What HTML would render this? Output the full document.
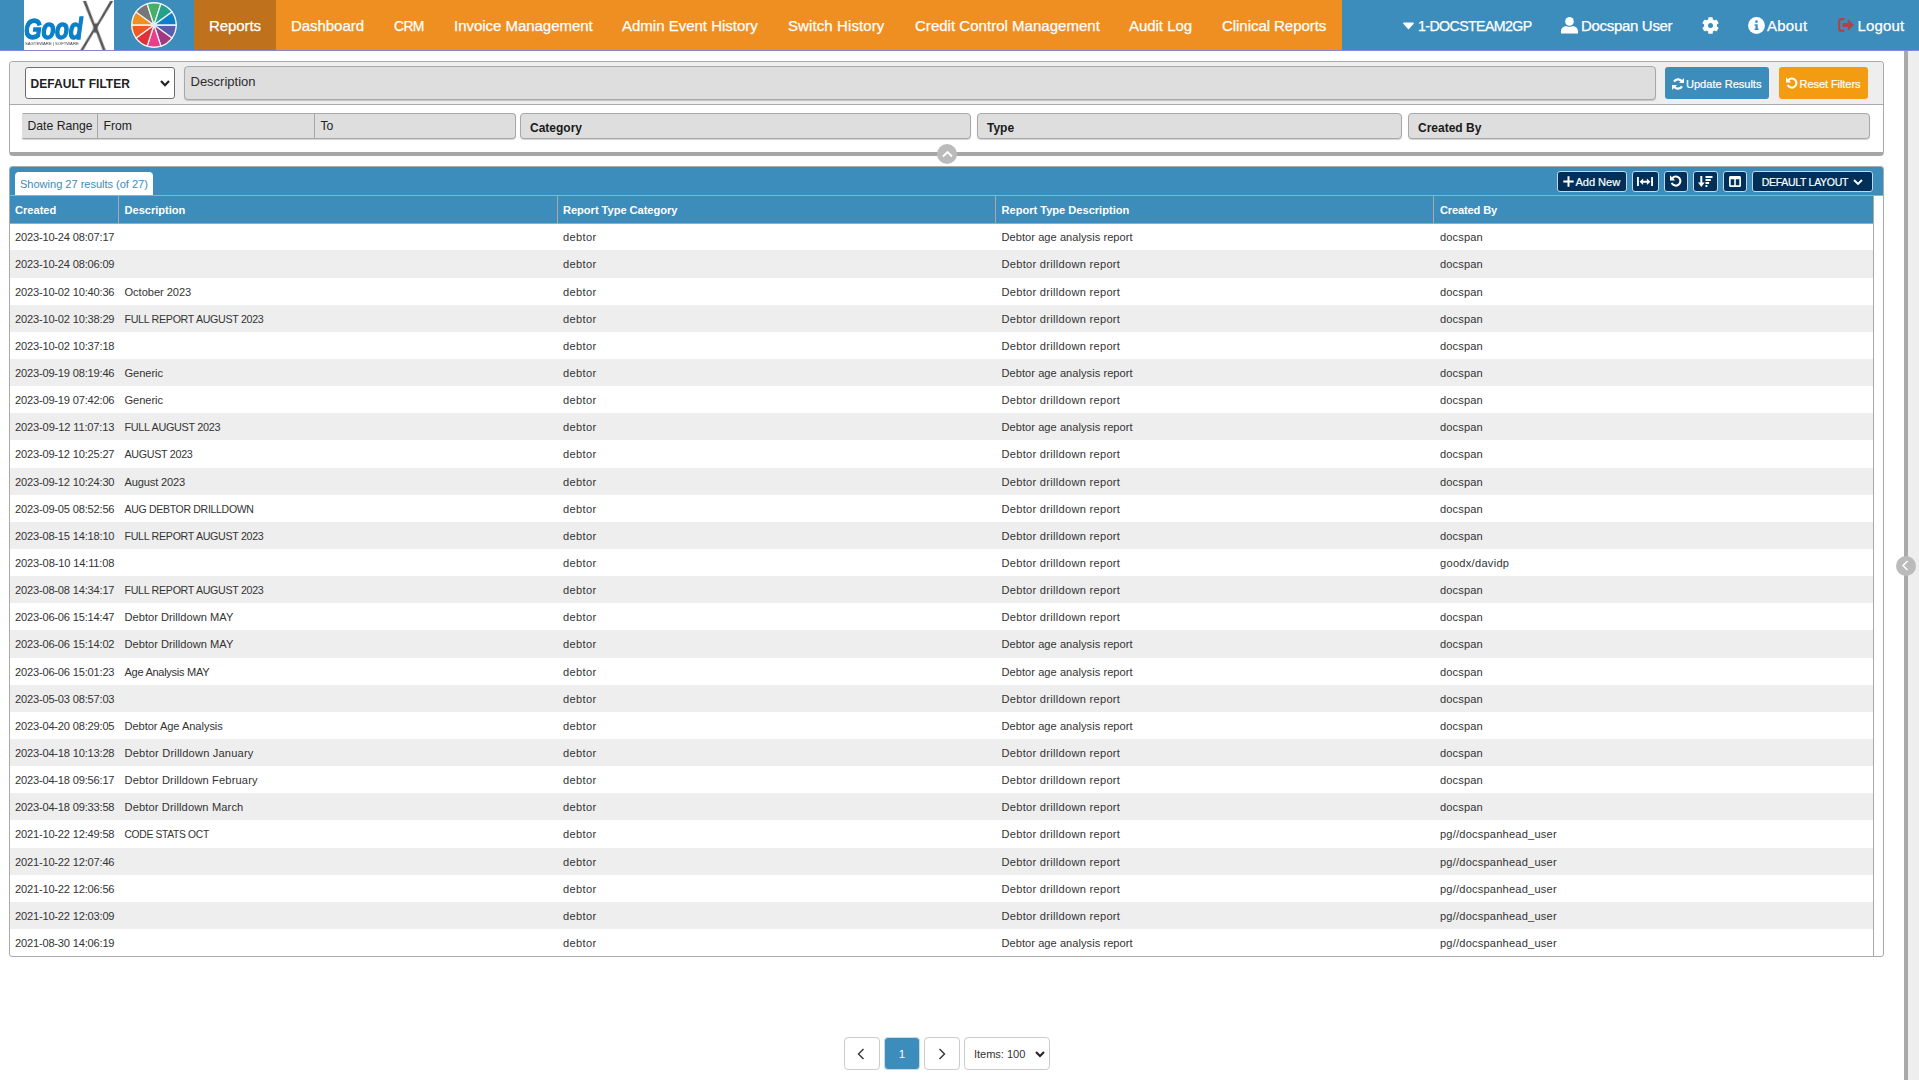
<!DOCTYPE html>
<html lang="en"><head><meta charset="utf-8"><title>GoodX Reports</title>
<style>
*{box-sizing:border-box;margin:0;padding:0}
html,body{width:1919px;height:1080px;overflow:hidden;background:#fff}
body{font-family:"Liberation Sans",sans-serif;color:#333;position:relative}
.abs{position:absolute}
svg{display:block;position:absolute}
/* NAV */
#nav{position:absolute;left:0;top:0;width:1919px;height:51px;background:#3c8dbc;border-bottom:1px solid #8a86d6}
#logo{position:absolute;left:24px;top:0;width:90px;height:50px;background:#fff;overflow:hidden}
#logo .good{position:absolute;left:0.3px;top:14.3px;font-weight:bold;font-style:italic;font-size:29.3px;line-height:30px;color:#0a80c8;-webkit-text-stroke:1.4px #0a80c8;transform-origin:0 0;transform:scaleX(.775);letter-spacing:-0.3px}
#logo .x{position:absolute;left:42.5px;top:-15.1px;font-family:"Liberation Sans",sans-serif;font-size:84px;line-height:90px;color:#555;transform-origin:50% 50%;transform:skewX(-6deg) scaleX(.7);filter:url(#thin)}
#logo .sub{position:absolute;left:1px;top:42.3px;font-size:10px;line-height:10px;color:#3a3a3a;white-space:nowrap;transform-origin:0 0;transform:scale(.42)}
#orange{position:absolute;left:194px;top:0;width:1148px;height:50px;background:#ef8f21}
#active{position:absolute;left:194px;top:0;width:82px;height:50px;background:#bf721b}
.ni{position:absolute;top:0;height:52px;line-height:52px;color:#fff;white-space:nowrap;-webkit-text-stroke:.25px #fff}
/* right bar */
#rbar{position:absolute;left:1904px;top:51px;width:4px;height:1029px;background:#a9a9a9}
#rside{position:absolute;left:1908px;top:51px;width:11px;height:1029px;background:#eee}
#rcirc{position:absolute;left:1896px;top:556px;width:20px;height:20px;border-radius:50%;background:#bbb}
/* FILTER */
#filter{position:absolute;left:9px;top:61px;width:1875px;height:95px;border:1px solid #aaa;border-bottom:4px solid #a6a6a6;border-radius:4px;background:#fff}
#frow1{position:absolute;left:0;top:0;width:1873px;height:43px;background:#eee;border-bottom:1px solid #aaa;border-radius:3px 3px 0 0}
.inp{position:absolute;background:#dedede;border:1px solid #a8a8a8;border-radius:4px;box-shadow:0 1px 1px rgba(0,0,0,.18)}
.inp span{position:absolute;white-space:nowrap}
#sel{position:absolute;left:25px;top:67px;width:150px;height:32px;background:#fff;border:1px solid #6e6e6e;border-radius:3px}
#sel span{position:absolute;left:4.5px;top:1.2px;line-height:31px;font-weight:bold;color:#222;white-space:nowrap}
.btn{position:absolute;border-radius:3px;color:#fff;white-space:nowrap;-webkit-text-stroke:.2px #fff}
/* GRID */
#grid{position:absolute;left:9px;top:166px;width:1875px;height:791px;border:1px solid #aaa;border-radius:3px;background:#fff;overflow:hidden}
#gbar{position:absolute;left:0;top:0;width:1873px;height:29px;background:#3c8dbc;border-bottom:1px solid #a9a9a9}
#ghead{z-index:2;position:absolute;left:0;top:28px;width:1863px;height:29px;background:#3c8dbc;border-top:1px solid #a9a9a9;border-bottom:1px solid #a9a9a9}
#ghead span{position:absolute;top:0.8px;line-height:27px;color:#fff;font-weight:bold;white-space:nowrap}
#ghead i{position:absolute;top:0;width:1px;height:27px;background:#a9a9a9}
#vline{position:absolute;left:1863px;top:29px;width:1px;height:762px;background:#a9a9a9}
#tab{position:absolute;left:5px;top:5px;width:138px;height:24px;background:#fff;border-radius:4px 4px 0 0;color:#3c8dbc;line-height:24px;white-space:nowrap}
#tab span{position:absolute;left:5px;top:0}
#rows{position:absolute;left:0;top:0;width:1863px}
.tr{position:absolute;left:0;width:1863px;line-height:27.1px;color:#333;white-space:nowrap}
.tr:nth-child(even){background:#eee}
.tr span{position:absolute;top:1.1px}
.c1{left:5px}.c2{left:114.5px}.c3{left:553px}.c4{left:991.5px}.c5{left:1430px}
.dt{font-size:10.66px}
.tb{position:absolute;top:4px;height:21px;background:#00305a;border:1px solid #c5d6e4;border-radius:3px;color:#fff;font-size:11.5px;line-height:19px;white-space:nowrap;-webkit-text-stroke:.2px #fff}
/* PAGER */
.pg{position:absolute;top:1037px;height:33px;border:1px solid #ccc;border-radius:4px;background:#fff}
</style></head><body>

<svg width="0" height="0" style="position:absolute"><defs><filter id="thin" x="-10%" y="-10%" width="120%" height="120%"><feMorphology operator="erode" radius="1.2"/></filter></defs></svg>
<div id="nav">
  <div id="logo"><span class="good">Good</span><span class="x">X</span><span class="sub">SAGTEWARE | SOFTWARE</span></div>
  <svg style="left:131.3px;top:1.9px" width="46" height="46" viewBox="-23 -23 46 46"><circle r="22.6" fill="#eef3f7"/><path d="M0 0L22.20 0.00A22.2 22.2 0 0 1 17.96 13.05Z" fill="#5b5ea6" stroke="#eef3f7" stroke-width="1.3"/><path d="M0 0L17.96 13.05A22.2 22.2 0 0 1 6.86 21.11Z" fill="#a0397f" stroke="#eef3f7" stroke-width="1.3"/><path d="M0 0L6.86 21.11A22.2 22.2 0 0 1 -6.86 21.11Z" fill="#e83e8c" stroke="#eef3f7" stroke-width="1.3"/><path d="M0 0L-6.86 21.11A22.2 22.2 0 0 1 -17.96 13.05Z" fill="#e03038" stroke="#eef3f7" stroke-width="1.3"/><path d="M0 0L-17.96 13.05A22.2 22.2 0 0 1 -22.20 0.00Z" fill="#f05a22" stroke="#eef3f7" stroke-width="1.3"/><path d="M0 0L-22.20 0.00A22.2 22.2 0 0 1 -17.96 -13.05Z" fill="#f09020" stroke="#eef3f7" stroke-width="1.3"/><path d="M0 0L-17.96 -13.05A22.2 22.2 0 0 1 -6.86 -21.11Z" fill="#777777" stroke="#eef3f7" stroke-width="1.3"/><path d="M0 0L-6.86 -21.11A22.2 22.2 0 0 1 6.86 -21.11Z" fill="#45b068" stroke="#eef3f7" stroke-width="1.3"/><path d="M0 0L6.86 -21.11A22.2 22.2 0 0 1 17.96 -13.05Z" fill="#25a08c" stroke="#eef3f7" stroke-width="1.3"/><path d="M0 0L17.96 -13.05A22.2 22.2 0 0 1 22.20 -0.00Z" fill="#0a80c8" stroke="#eef3f7" stroke-width="1.3"/><circle r="2" fill="#dfeaf2"/></svg>
  <div id="orange"></div><div id="active"></div>
  <span class="ni" id="n1" style="left:209px;font-size:15.0px;letter-spacing:-0.085px">Reports</span>
  <span class="ni" id="n2" style="left:291px;font-size:15.0px;letter-spacing:-0.049px">Dashboard</span>
  <span class="ni" id="n3" style="left:394px;font-size:13.9px;letter-spacing:-0.597px">CRM</span>
  <span class="ni" id="n4" style="left:454px;font-size:15.0px;letter-spacing:-0.029px">Invoice Management</span>
  <span class="ni" id="n5" style="left:622px;font-size:15.0px;letter-spacing:-0.007px">Admin Event History</span>
  <span class="ni" id="n6" style="left:788px;font-size:15.0px;letter-spacing:0.099px">Switch History</span>
  <span class="ni" id="n7" style="left:915px;font-size:15.0px;letter-spacing:0.024px">Credit Control Management</span>
  <span class="ni" id="n8" style="left:1129px;font-size:15.0px;letter-spacing:-0.038px">Audit Log</span>
  <span class="ni" id="n9" style="left:1222px;font-size:15.0px;letter-spacing:-0.049px">Clinical Reports</span>

  <svg style="left:1403px;top:22px" width="11" height="8" viewBox="0 0 11 8"><path d="M.8 .6h9.4c.6 0 .9.7.5 1.1L6 7c-.3.3-.7.3-1 0L.3 1.700C-.1 1.300.2.6.8.600z" fill="#fff"/></svg>
  <span class="ni" id="n10" style="left:1418px;font-size:14.19px;letter-spacing:-0.602px">1-DOCSTEAM2GP</span>
  <svg style="left:1561px;top:16.500px" width="17" height="17" viewBox="0 0 17 17"><circle cx="8.5" cy="4.400" r="4.300" fill="#fff"/><path d="M0 16.500v-2.300c0-2.800 2.200-5 5-5h.700c.900.400 1.800.600 2.800.600s1.900-.2 2.800-.6h.700c2.800 0 5 2.200 5 5v2.300z" fill="#fff"/></svg>
  <span class="ni" id="n11" style="left:1581px;font-size:15.0px;letter-spacing:-0.312px">Docspan User</span>
  <svg style="left:1701.600px;top:16.700px" width="17" height="17" viewBox="-8.500 -8.500 17 17"><rect x="-2.300" y="-8.300" width="4.600" height="16.600" rx="0.900" fill="#fff" transform="rotate(0)"/><rect x="-2.300" y="-8.300" width="4.600" height="16.600" rx="0.900" fill="#fff" transform="rotate(60)"/><rect x="-2.300" y="-8.300" width="4.600" height="16.600" rx="0.900" fill="#fff" transform="rotate(120)"/><circle r="6.500" fill="#fff"/><circle r="2.500" fill="#3c8dbc"/></svg>
  <svg style="left:1747.500px;top:16.500px" width="17" height="17" viewBox="0 0 17 17"><circle cx="8.5" cy="8.5" r="8.400" fill="#fff"/><circle cx="8.500" cy="4.700" r="1.350" fill="#3c8dbc"/><path d="M6.600 7.300h3.100v4.300h.9v1.400h-4v-1.400h.9v-2.900h-.9z" fill="#3c8dbc"/></svg>
  <span class="ni" id="n12" style="left:1767px;font-size:15.0px;letter-spacing:0.225px">About</span>
  <svg style="left:1838px;top:18px" width="16" height="14" viewBox="0 0 16 14"><path d="M5.600 1.200H3.200c-1.100 0-2 .9-2 2v7.600c0 1.100.9 2 2 2h2.400" fill="none" stroke="#ad4643" stroke-width="2.200" stroke-linecap="round"/><path d="M5.200 5h4.500V2.400c0-.6.700-.9 1.100-.5l4.700 4.600c.3.300.3.700 0 1l-4.700 4.600c-.4.400-1.100.100-1.100-.5V9H5.200c-.4 0-.7-.3-.7-.7V5.700c0-.4.300-.7.700-.7z" fill="#ad4643"/></svg>
  <span class="ni" id="n13" style="left:1857.500px;font-size:15.0px;letter-spacing:0.167px">Logout</span>
</div>

<div id="rbar"></div><div id="rside"></div>
<div id="rcirc"><svg style="left:5px;top:3.800px" width="8" height="11" viewBox="0 0 8 11"><path d="M6.500 1L2 5.500 6.500 10" fill="none" stroke="#fff" stroke-width="1.500"/></svg></div>

<div id="filter"><div id="frow1"></div></div>
<div id="sel"><span id="seltxt" style="font-size:12.0px;letter-spacing:0.044px">DEFAULT FILTER</span><svg style="left:134px;top:12px" width="10" height="7" viewBox="0 0 10 7"><path d="M1 1l4 4.200L9 1" fill="none" stroke="#222" stroke-width="2.200"/></svg></div>
<div class="inp" style="left:184px;top:66px;width:1472px;height:34px"><span id="tdesc" style="left:5.500px;top:0;line-height:29px;font-size:13px;color:#2c2c2c">Description</span></div>
<div class="btn" id="bupd" style="left:1665px;top:67px;width:104px;height:32px;background:#3c8dbc">
  <svg style="left:7px;top:10.500px" width="12" height="12" viewBox="0 0 12 12"><path d="M10.300 4.500A4.600 4.600 0 0 0 2 3.600M1.700 7.500A4.600 4.600 0 0 0 10 8.400" fill="none" stroke="#fff" stroke-width="2.200"/><path d="M12 0v5H7zM0 12V7h5z" fill="#fff"/></svg>
  <span id="tupd" class="abs" style="left:21px;top:1px;line-height:32px;font-size:11.1px;letter-spacing:-0.030px">Update Results</span></div>
<div class="btn" id="brst" style="left:1779px;top:67px;width:89px;height:32px;background:#f39c12">
  <svg style="left:6.500px;top:10px" width="12" height="12" viewBox="0 0 12 12"><path d="M2.300 3.300A4.500 4.500 0 1 1 1.700 7.800" fill="none" stroke="#fff" stroke-width="2.100"/><path d="M0 .2v5.200h5.200z" fill="#fff"/></svg>
  <span id="trst" class="abs" style="left:20.500px;top:1px;line-height:32px;font-size:11.1px;letter-spacing:-0.103px">Reset Filters</span></div>

<div class="inp" style="left:22px;top:113px;width:494px;height:26px;border-left-color:#dedede;border-radius:1px 4px 4px 1px">
  <span id="tdr" style="left:4.500px;top:1.2px;line-height:23px;font-size:12.200px;color:#222">Date Range</span>
  <i class="abs" style="left:74px;top:0;width:1px;height:24px;background:#a8a8a8"></i>
  <span id="tfrom" style="left:80.500px;top:1.2px;line-height:23px;font-size:12.200px;color:#222">From</span>
  <i class="abs" style="left:291px;top:0;width:1px;height:24px;background:#a8a8a8"></i>
  <span id="tto" style="left:297.500px;top:1.2px;line-height:23px;font-size:12.200px;color:#222">To</span>
</div>
<div class="inp" style="left:520px;top:113px;width:451px;height:26px"><span id="tcat" style="left:9px;top:1.200px;line-height:26px;font-size:12px;font-weight:bold;color:#1a1a1a">Category</span></div>
<div class="inp" style="left:977px;top:113px;width:425px;height:26px"><span id="ttyp" style="left:9px;top:1.200px;line-height:26px;font-size:12px;font-weight:bold;color:#1a1a1a">Type</span></div>
<div class="inp" style="left:1408px;top:113px;width:462px;height:26px"><span id="tcb" style="left:9px;top:1.200px;line-height:26px;font-size:12px;font-weight:bold;color:#1a1a1a">Created By</span></div>
<div class="abs" style="left:937px;top:144px;width:20px;height:20px;border-radius:50%;background:#bbb"><svg style="left:4.500px;top:5.500px" width="11" height="8" viewBox="0 0 11 8"><path d="M1 6.500L5.500 2 10 6.500" fill="none" stroke="#fff" stroke-width="1.800"/></svg></div>

<div id="grid">
  <div id="gbar"></div>
  <div id="tab"><span id="ttab" style="font-size:11.1px;letter-spacing:-0.039px">Showing 27 results (of 27)</span></div>
  <div class="tb" id="b1" style="left:1547px;width:70px"><svg style="left:5px;top:4px" width="11" height="11" viewBox="0 0 11 11"><path d="M5.500 .3v10.400M.3 5.500h10.400" stroke="#fff" stroke-width="2" fill="none"/></svg><span id="tadd" class="abs" style="left:17.500px;top:0.8px;font-size:11.1px;letter-spacing:-0.051px">Add New</span></div>
  <div class="tb" style="left:1622px;width:27px"><svg style="left:4.300px;top:4.500px" width="16" height="9.500" viewBox="0 0 17 10"><path d="M1 0v10M16 0v10" stroke="#fff" stroke-width="2" fill="none"/><path d="M5 5h7" stroke="#fff" stroke-width="1.900" fill="none"/><path d="M2.800 5l3.700-3.400v6.800zM14.200 5l-3.700-3.400v6.800z" fill="#fff"/></svg></div>
  <div class="tb" style="left:1654px;width:24px"><svg style="left:4.500px;top:3px" width="12" height="12" viewBox="0 0 12 12"><path d="M2.300 3.300A4.500 4.500 0 1 1 1.700 7.800" fill="none" stroke="#fff" stroke-width="2.100"/><path d="M0 .2v5.200h5.200z" fill="#fff"/></svg></div>
  <div class="tb" style="left:1683px;width:25px"><svg style="left:3.500px;top:4px" width="15" height="11" viewBox="0 0 15 11"><path d="M3.300 0v9" stroke="#fff" stroke-width="2" fill="none"/><path d="M0 6.600h6.600L3.300 11z" fill="#fff"/><path d="M7.500 1h7M7.500 4h5.300M7.500 7h3.600M7.500 10h1.900" stroke="#fff" stroke-width="1.900" fill="none"/></svg></div>
  <div class="tb" style="left:1713px;width:24px"><svg style="left:5px;top:4px" width="12" height="11" viewBox="0 0 12 11"><path d="M1.500 0h9c.8 0 1.500.7 1.500 1.500v8c0 .8-.7 1.500-1.500 1.500h-9C.7 11 0 10.300 0 9.500v-8C0 .7.700 0 1.500 0zM1.700 3.200v6.100h3.500V3.200zM6.800 3.200v6.100h3.500V3.200z" fill="#fff" fill-rule="evenodd"/></svg></div>
  <div class="tb" style="left:1742px;width:121px"><span id="tdl" class="abs" style="left:8.700px;top:0.8px;font-size:10.52px;letter-spacing:-0.298px">DEFAULT LAYOUT</span><svg style="left:99.500px;top:6.500px" width="10" height="7" viewBox="0 0 10 7"><path d="M1 1l4 4L9 1" fill="none" stroke="#fff" stroke-width="1.900"/></svg></div>
  <div id="ghead">
    <span id="h1" style="left:5px;font-size:11.1px;letter-spacing:0.000px">Created</span><i style="left:108px"></i>
    <span id="h2" style="left:114.500px;font-size:11.1px;letter-spacing:-0.016px">Description</span><i style="left:547px"></i>
    <span id="h3" style="left:553px;font-size:11.1px;letter-spacing:-0.033px">Report Type Category</span><i style="left:985px"></i>
    <span id="h4" style="left:991.500px;font-size:11.1px;letter-spacing:-0.012px">Report Type Description</span><i style="left:1423px"></i>
    <span id="h5" style="left:1430px;font-size:11.1px;letter-spacing:-0.158px">Created By</span>
  </div>
  <div id="vline"></div>
  <div id="rows">
<div class="tr" style="top:56px;height:27px"><span class="c1" style="font-size:11.1px;letter-spacing:-0.193px">2023-10-24 08:07:17</span><span class="c3" style="font-size:11.1px;letter-spacing:0.357px">debtor</span><span class="c4" style="font-size:11.1px;letter-spacing:0.038px">Debtor age analysis report</span><span class="c5" style="font-size:11.1px;letter-spacing:0.118px">docspan</span></div>
<div class="tr" style="top:83px;height:28px"><span class="c1" style="font-size:11.1px;letter-spacing:-0.193px">2023-10-24 08:06:09</span><span class="c3" style="font-size:11.1px;letter-spacing:0.357px">debtor</span><span class="c4" style="font-size:11.1px;letter-spacing:0.282px">Debtor drilldown report</span><span class="c5" style="font-size:11.1px;letter-spacing:0.118px">docspan</span></div>
<div class="tr" style="top:111px;height:27px"><span class="c1" style="font-size:11.1px;letter-spacing:-0.193px">2023-10-02 10:40:36</span><span class="c2" style="font-size:11.1px;letter-spacing:-0.042px">October 2023</span><span class="c3" style="font-size:11.1px;letter-spacing:0.357px">debtor</span><span class="c4" style="font-size:11.1px;letter-spacing:0.282px">Debtor drilldown report</span><span class="c5" style="font-size:11.1px;letter-spacing:0.118px">docspan</span></div>
<div class="tr" style="top:138px;height:27px"><span class="c1" style="font-size:11.1px;letter-spacing:-0.193px">2023-10-02 10:38:29</span><span class="c2" style="font-size:10.67px;letter-spacing:-0.300px">FULL REPORT AUGUST 2023</span><span class="c3" style="font-size:11.1px;letter-spacing:0.357px">debtor</span><span class="c4" style="font-size:11.1px;letter-spacing:0.282px">Debtor drilldown report</span><span class="c5" style="font-size:11.1px;letter-spacing:0.118px">docspan</span></div>
<div class="tr" style="top:165px;height:27px"><span class="c1" style="font-size:11.1px;letter-spacing:-0.193px">2023-10-02 10:37:18</span><span class="c3" style="font-size:11.1px;letter-spacing:0.357px">debtor</span><span class="c4" style="font-size:11.1px;letter-spacing:0.282px">Debtor drilldown report</span><span class="c5" style="font-size:11.1px;letter-spacing:0.118px">docspan</span></div>
<div class="tr" style="top:192px;height:27px"><span class="c1" style="font-size:11.1px;letter-spacing:-0.193px">2023-09-19 08:19:46</span><span class="c2" style="font-size:11.1px;letter-spacing:-0.056px">Generic</span><span class="c3" style="font-size:11.1px;letter-spacing:0.357px">debtor</span><span class="c4" style="font-size:11.1px;letter-spacing:0.038px">Debtor age analysis report</span><span class="c5" style="font-size:11.1px;letter-spacing:0.118px">docspan</span></div>
<div class="tr" style="top:219px;height:27px"><span class="c1" style="font-size:11.1px;letter-spacing:-0.193px">2023-09-19 07:42:06</span><span class="c2" style="font-size:11.1px;letter-spacing:-0.056px">Generic</span><span class="c3" style="font-size:11.1px;letter-spacing:0.357px">debtor</span><span class="c4" style="font-size:11.1px;letter-spacing:0.282px">Debtor drilldown report</span><span class="c5" style="font-size:11.1px;letter-spacing:0.118px">docspan</span></div>
<div class="tr" style="top:246px;height:27px"><span class="c1" style="font-size:11.1px;letter-spacing:-0.150px">2023-09-12 11:07:13</span><span class="c2" style="font-size:10.83px;letter-spacing:-0.299px">FULL AUGUST 2023</span><span class="c3" style="font-size:11.1px;letter-spacing:0.357px">debtor</span><span class="c4" style="font-size:11.1px;letter-spacing:0.038px">Debtor age analysis report</span><span class="c5" style="font-size:11.1px;letter-spacing:0.118px">docspan</span></div>
<div class="tr" style="top:273px;height:28px"><span class="c1" style="font-size:11.1px;letter-spacing:-0.193px">2023-09-12 10:25:27</span><span class="c2" style="font-size:10.72px;letter-spacing:-0.300px">AUGUST 2023</span><span class="c3" style="font-size:11.1px;letter-spacing:0.357px">debtor</span><span class="c4" style="font-size:11.1px;letter-spacing:0.282px">Debtor drilldown report</span><span class="c5" style="font-size:11.1px;letter-spacing:0.118px">docspan</span></div>
<div class="tr" style="top:301px;height:27px"><span class="c1" style="font-size:11.1px;letter-spacing:-0.193px">2023-09-12 10:24:30</span><span class="c2" style="font-size:11.1px;letter-spacing:-0.151px">August 2023</span><span class="c3" style="font-size:11.1px;letter-spacing:0.357px">debtor</span><span class="c4" style="font-size:11.1px;letter-spacing:0.282px">Debtor drilldown report</span><span class="c5" style="font-size:11.1px;letter-spacing:0.118px">docspan</span></div>
<div class="tr" style="top:328px;height:27px"><span class="c1" style="font-size:11.1px;letter-spacing:-0.193px">2023-09-05 08:52:56</span><span class="c2" style="font-size:10.51px;letter-spacing:-0.301px">AUG DEBTOR DRILLDOWN</span><span class="c3" style="font-size:11.1px;letter-spacing:0.357px">debtor</span><span class="c4" style="font-size:11.1px;letter-spacing:0.282px">Debtor drilldown report</span><span class="c5" style="font-size:11.1px;letter-spacing:0.118px">docspan</span></div>
<div class="tr" style="top:355px;height:27px"><span class="c1" style="font-size:11.1px;letter-spacing:-0.193px">2023-08-15 14:18:10</span><span class="c2" style="font-size:10.67px;letter-spacing:-0.300px">FULL REPORT AUGUST 2023</span><span class="c3" style="font-size:11.1px;letter-spacing:0.357px">debtor</span><span class="c4" style="font-size:11.1px;letter-spacing:0.282px">Debtor drilldown report</span><span class="c5" style="font-size:11.1px;letter-spacing:0.118px">docspan</span></div>
<div class="tr" style="top:382px;height:27px"><span class="c1" style="font-size:11.1px;letter-spacing:-0.150px">2023-08-10 14:11:08</span><span class="c3" style="font-size:11.1px;letter-spacing:0.357px">debtor</span><span class="c4" style="font-size:11.1px;letter-spacing:0.282px">Debtor drilldown report</span><span class="c5" style="font-size:11.1px;letter-spacing:0.276px">goodx/davidp</span></div>
<div class="tr" style="top:409px;height:27px"><span class="c1" style="font-size:11.1px;letter-spacing:-0.193px">2023-08-08 14:34:17</span><span class="c2" style="font-size:10.67px;letter-spacing:-0.300px">FULL REPORT AUGUST 2023</span><span class="c3" style="font-size:11.1px;letter-spacing:0.357px">debtor</span><span class="c4" style="font-size:11.1px;letter-spacing:0.282px">Debtor drilldown report</span><span class="c5" style="font-size:11.1px;letter-spacing:0.118px">docspan</span></div>
<div class="tr" style="top:436px;height:27px"><span class="c1" style="font-size:11.1px;letter-spacing:-0.193px">2023-06-06 15:14:47</span><span class="c2" style="font-size:11.1px;letter-spacing:0.027px">Debtor Drilldown MAY</span><span class="c3" style="font-size:11.1px;letter-spacing:0.357px">debtor</span><span class="c4" style="font-size:11.1px;letter-spacing:0.282px">Debtor drilldown report</span><span class="c5" style="font-size:11.1px;letter-spacing:0.118px">docspan</span></div>
<div class="tr" style="top:463px;height:28px"><span class="c1" style="font-size:11.1px;letter-spacing:-0.193px">2023-06-06 15:14:02</span><span class="c2" style="font-size:11.1px;letter-spacing:0.027px">Debtor Drilldown MAY</span><span class="c3" style="font-size:11.1px;letter-spacing:0.357px">debtor</span><span class="c4" style="font-size:11.1px;letter-spacing:0.038px">Debtor age analysis report</span><span class="c5" style="font-size:11.1px;letter-spacing:0.118px">docspan</span></div>
<div class="tr" style="top:491px;height:27px"><span class="c1" style="font-size:11.1px;letter-spacing:-0.193px">2023-06-06 15:01:23</span><span class="c2" style="font-size:11.07px;letter-spacing:-0.302px">Age Analysis MAY</span><span class="c3" style="font-size:11.1px;letter-spacing:0.357px">debtor</span><span class="c4" style="font-size:11.1px;letter-spacing:0.038px">Debtor age analysis report</span><span class="c5" style="font-size:11.1px;letter-spacing:0.118px">docspan</span></div>
<div class="tr" style="top:518px;height:27px"><span class="c1" style="font-size:11.1px;letter-spacing:-0.193px">2023-05-03 08:57:03</span><span class="c3" style="font-size:11.1px;letter-spacing:0.357px">debtor</span><span class="c4" style="font-size:11.1px;letter-spacing:0.282px">Debtor drilldown report</span><span class="c5" style="font-size:11.1px;letter-spacing:0.118px">docspan</span></div>
<div class="tr" style="top:545px;height:27px"><span class="c1" style="font-size:11.1px;letter-spacing:-0.193px">2023-04-20 08:29:05</span><span class="c2" style="font-size:11.1px;letter-spacing:-0.053px">Debtor Age Analysis</span><span class="c3" style="font-size:11.1px;letter-spacing:0.357px">debtor</span><span class="c4" style="font-size:11.1px;letter-spacing:0.038px">Debtor age analysis report</span><span class="c5" style="font-size:11.1px;letter-spacing:0.118px">docspan</span></div>
<div class="tr" style="top:572px;height:27px"><span class="c1" style="font-size:11.1px;letter-spacing:-0.193px">2023-04-18 10:13:28</span><span class="c2" style="font-size:11.1px;letter-spacing:0.188px">Debtor Drilldown January</span><span class="c3" style="font-size:11.1px;letter-spacing:0.357px">debtor</span><span class="c4" style="font-size:11.1px;letter-spacing:0.282px">Debtor drilldown report</span><span class="c5" style="font-size:11.1px;letter-spacing:0.118px">docspan</span></div>
<div class="tr" style="top:599px;height:27px"><span class="c1" style="font-size:11.1px;letter-spacing:-0.193px">2023-04-18 09:56:17</span><span class="c2" style="font-size:11.1px;letter-spacing:0.149px">Debtor Drilldown February</span><span class="c3" style="font-size:11.1px;letter-spacing:0.357px">debtor</span><span class="c4" style="font-size:11.1px;letter-spacing:0.282px">Debtor drilldown report</span><span class="c5" style="font-size:11.1px;letter-spacing:0.118px">docspan</span></div>
<div class="tr" style="top:626px;height:27px"><span class="c1" style="font-size:11.1px;letter-spacing:-0.193px">2023-04-18 09:33:58</span><span class="c2" style="font-size:11.1px;letter-spacing:0.135px">Debtor Drilldown March</span><span class="c3" style="font-size:11.1px;letter-spacing:0.357px">debtor</span><span class="c4" style="font-size:11.1px;letter-spacing:0.282px">Debtor drilldown report</span><span class="c5" style="font-size:11.1px;letter-spacing:0.118px">docspan</span></div>
<div class="tr" style="top:653px;height:28px"><span class="c1" style="font-size:11.1px;letter-spacing:-0.193px">2021-10-22 12:49:58</span><span class="c2" style="font-size:10.27px;letter-spacing:-0.301px">CODE STATS OCT</span><span class="c3" style="font-size:11.1px;letter-spacing:0.357px">debtor</span><span class="c4" style="font-size:11.1px;letter-spacing:0.282px">Debtor drilldown report</span><span class="c5" style="font-size:11.1px;letter-spacing:0.195px">pg//docspanhead_user</span></div>
<div class="tr" style="top:681px;height:27px"><span class="c1" style="font-size:11.1px;letter-spacing:-0.193px">2021-10-22 12:07:46</span><span class="c3" style="font-size:11.1px;letter-spacing:0.357px">debtor</span><span class="c4" style="font-size:11.1px;letter-spacing:0.282px">Debtor drilldown report</span><span class="c5" style="font-size:11.1px;letter-spacing:0.195px">pg//docspanhead_user</span></div>
<div class="tr" style="top:708px;height:27px"><span class="c1" style="font-size:11.1px;letter-spacing:-0.193px">2021-10-22 12:06:56</span><span class="c3" style="font-size:11.1px;letter-spacing:0.357px">debtor</span><span class="c4" style="font-size:11.1px;letter-spacing:0.282px">Debtor drilldown report</span><span class="c5" style="font-size:11.1px;letter-spacing:0.195px">pg//docspanhead_user</span></div>
<div class="tr" style="top:735px;height:27px"><span class="c1" style="font-size:11.1px;letter-spacing:-0.193px">2021-10-22 12:03:09</span><span class="c3" style="font-size:11.1px;letter-spacing:0.357px">debtor</span><span class="c4" style="font-size:11.1px;letter-spacing:0.282px">Debtor drilldown report</span><span class="c5" style="font-size:11.1px;letter-spacing:0.195px">pg//docspanhead_user</span></div>
<div class="tr" style="top:762px;height:27px"><span class="c1" style="font-size:11.1px;letter-spacing:-0.193px">2021-08-30 14:06:19</span><span class="c3" style="font-size:11.1px;letter-spacing:0.357px">debtor</span><span class="c4" style="font-size:11.1px;letter-spacing:0.038px">Debtor age analysis report</span><span class="c5" style="font-size:11.1px;letter-spacing:0.195px">pg//docspanhead_user</span></div>
  </div>
</div>

<div class="pg" style="left:844px;width:36px"><svg style="left:12px;top:10px" width="8" height="12" viewBox="0 0 8 12"><path d="M6.500 1L1.500 6l5 5" fill="none" stroke="#333" stroke-width="1.400"/></svg></div>
<div class="pg" style="left:884px;width:36px;background:#3c8dbc;border-color:#c3dbea;color:#fff;font-size:11.500px;line-height:33px;text-align:center">1</div>
<div class="pg" style="left:924px;width:36px"><svg style="left:13px;top:10px" width="8" height="12" viewBox="0 0 8 12"><path d="M1.500 1l5 5-5 5" fill="none" stroke="#333" stroke-width="1.400"/></svg></div>
<div class="pg" style="left:964px;width:86px"><span id="titems" class="abs" style="left:9px;top:0;line-height:32px;color:#333;white-space:nowrap;font-size:11.1px;letter-spacing:-0.053px">Items: 100</span><svg style="left:70px;top:12.5px" width="10" height="7" viewBox="0 0 10 7"><path d="M1 1l4 4L9 1" fill="none" stroke="#222" stroke-width="2"/></svg></div>
</body></html>
